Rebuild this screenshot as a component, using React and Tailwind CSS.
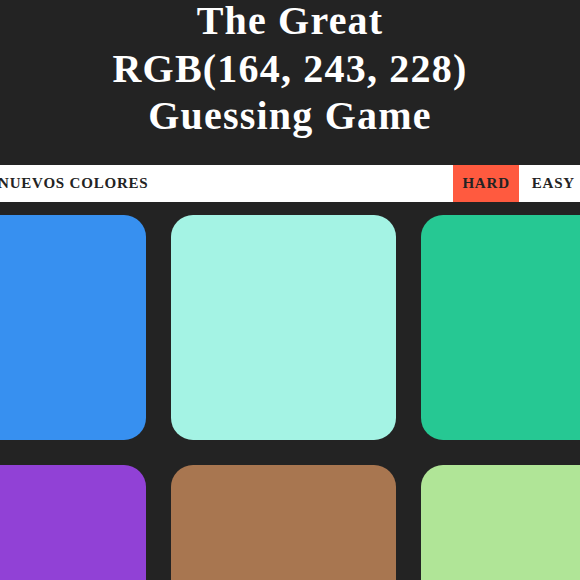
import React from 'react';

const colors = ['#3790f0', '#a4f3e4', '#26c893', '#9141d6', '#a87650', '#b0e597'];

const App = () => {
    return (
        <div className="w-[580px] h-[580px] overflow-hidden bg-[#232323] font-['Liberation_Serif',serif]">
            {/* Title */}
            <div className="h-[165px] flow-root">
                <h1 className="mt-[-3px] text-center text-white font-bold text-[40px] leading-[47.5px] tracking-[1.2px]">
                    The Great
                    <br />
                    RGB(164, 243, 228)
                    <br />
                    Guessing Game
                </h1>
            </div>

            {/* Stripe */}
            <div className="flex items-stretch h-[37px] bg-white text-[#232323] uppercase font-bold text-[15px] tracking-[0.8px]">
                <button className="ml-[-2px] pr-3 uppercase">Nuevos Colores</button>
                <div className="flex-1" />
                <button className="px-[9px] bg-[#ff5a3f] uppercase">Hard</button>
                <button className="pl-[13px] pr-[9px] mr-[-4px] uppercase">Easy</button>
            </div>

            {/* Squares */}
            <div className="w-[750px] ml-[-91.5px] flex flex-wrap">
                {colors.map((c, i) => (
                    <div
                        key={i}
                        className="w-[225px] h-[225px] m-[12.5px] rounded-[22px]"
                        style={{ backgroundColor: c }}
                    />
                ))}
            </div>
        </div>
    );
};

export default App;
